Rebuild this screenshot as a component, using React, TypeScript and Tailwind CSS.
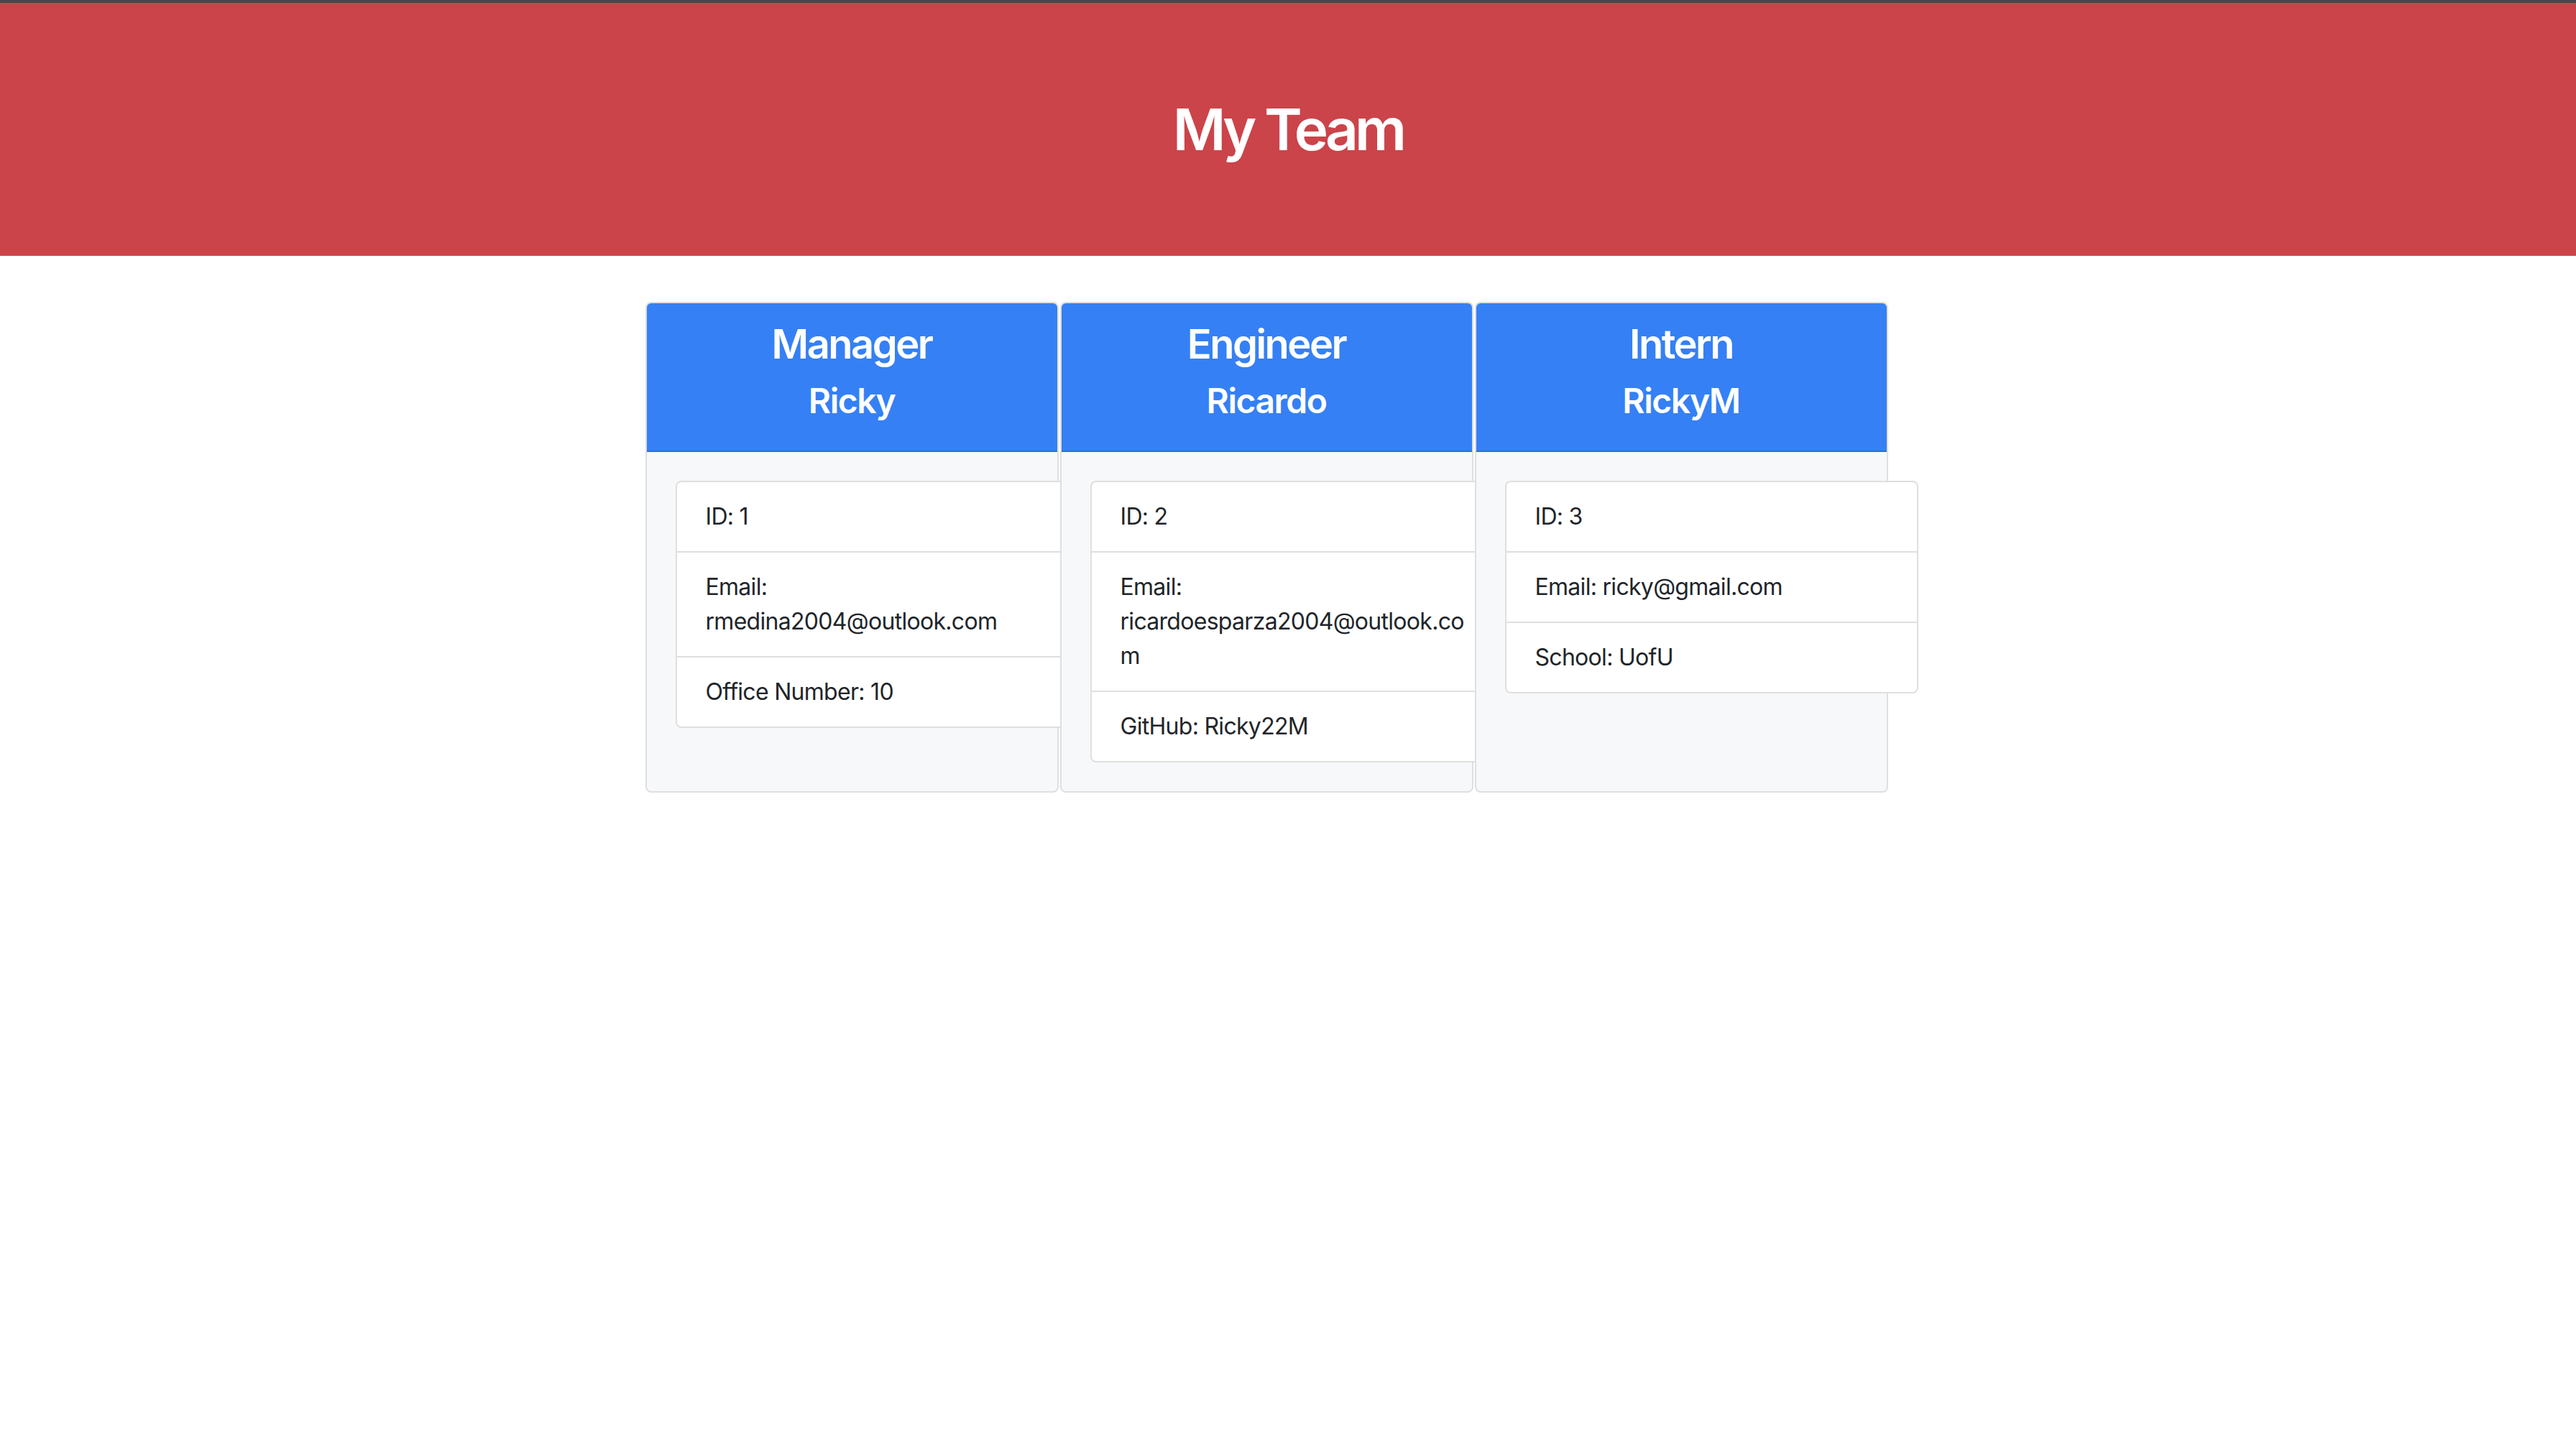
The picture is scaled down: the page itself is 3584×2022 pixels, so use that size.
import React from "react";

type Member = {
  role: string;
  name: string;
  items: string[];
};

const team: Member[] = [
  {
    role: "Manager",
    name: "Ricky",
    items: ["ID: 1", "Email: rmedina2004@outlook.com", "Office Number: 10"],
  },
  {
    role: "Engineer",
    name: "Ricardo",
    items: ["ID: 2", "Email: ricardoesparza2004@outlook.com", "GitHub: Ricky22M"],
  },
  {
    role: "Intern",
    name: "RickyM",
    items: ["ID: 3", "Email: ricky@gmail.com", "School: UofU"],
  },
];

function Card({ m }: { m: Member }) {
  return (
    <div className="w-[575px] shrink-0 flex flex-col border-2 border-[#dfdfdf] rounded-[8px] bg-[#f7f8fa] break-words">
      <div className="bg-[#3580f5] text-white text-center px-10 py-6 border-b-2 border-black/[.125] rounded-t-[6px]">
        <h3 className="text-[56px] leading-[67px] font-semibold tracking-[-0.045em] mb-4">{m.role}</h3>
        <h4 className="text-[48px] leading-[58px] font-semibold tracking-[-0.03em] mb-4">{m.name}</h4>
      </div>
      <div className="p-10">
        <ul className="w-[575px] bg-white border-2 border-black/[.125] rounded-[8px] flex flex-col">
          {m.items.map((t, i) => (
            <li
              key={i}
              className={
                "px-10 py-6 text-[32px] leading-[48px] tracking-[-0.022em] text-[#212529] break-words " +
                (i < m.items.length - 1 ? "border-b-2 border-black/[.125]" : "")
              }
            >
              {t}
            </li>
          ))}
        </ul>
      </div>
    </div>
  );
}

export default function App() {
  return (
    <div className="min-h-screen bg-white font-['Inter','Liberation_Sans',sans-serif]">
      <div className="h-[4px] bg-[#45484c]" />
      <header className="bg-[#cb444a] py-32 text-center">
        <h1 className="text-[80px] leading-[96px] font-semibold tracking-[-0.06em] text-white">My Team</h1>
      </header>
      <main className="flex justify-center items-stretch gap-[2px] pt-16 pr-[60px]">
        {team.map((m) => (
          <Card key={m.role} m={m} />
        ))}
      </main>
    </div>
  );
}
